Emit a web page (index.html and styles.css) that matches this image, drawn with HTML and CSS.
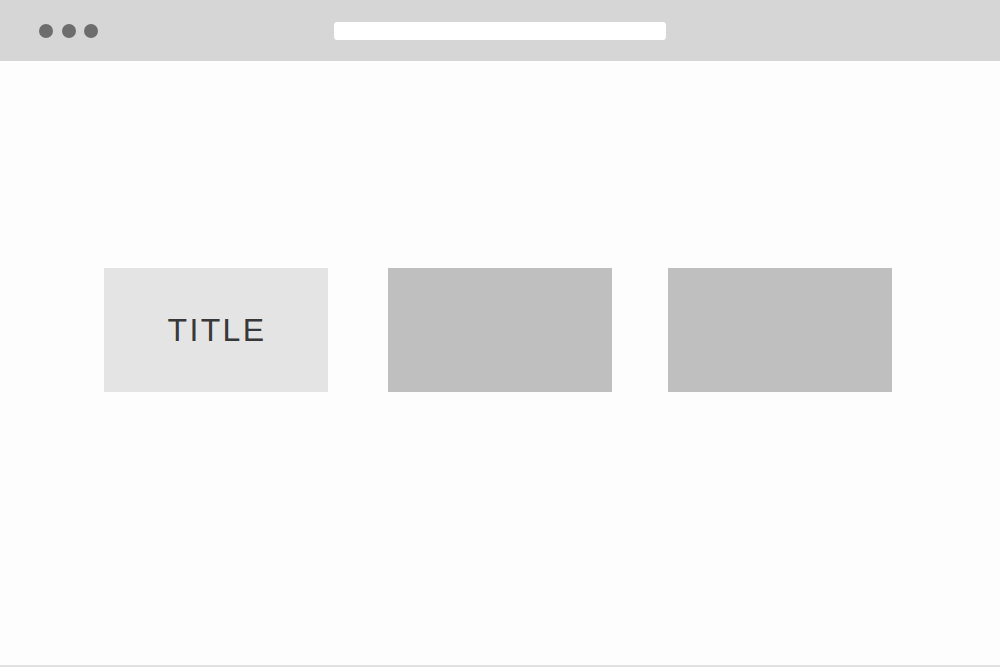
FILE: index.html
```html
<!DOCTYPE html>
<html>
<head>
<meta charset="utf-8">
<link rel="stylesheet" href="styles.css">
</head>
<body>
<div class="window">
  <header class="toolbar">
    <div class="dots">
      <span class="dot"></span>
      <span class="dot"></span>
      <span class="dot"></span>
    </div>
    <div class="address"></div>
  </header>
  <main class="content">
    <div class="cards">
      <div class="card card-title"><span class="title">TITLE</span></div>
      <div class="card card-gray card-mid"></div>
      <div class="card card-gray"></div>
    </div>
  </main>
  <div class="bottom-line"></div>
</div>
</body>
</html>
```

FILE: styles.css
```css
html, body {
  margin: 0;
  padding: 0;
  background: #fdfdfd;
  font-family: "Liberation Sans", Arial, sans-serif;
}
.window {
  width: 1000px;
  height: 667px;
  display: flex;
  flex-direction: column;
}
.toolbar {
  height: 61px;
  background: #d6d6d6;
  display: flex;
  align-items: center;
  position: relative;
}
.dots {
  display: flex;
  gap: 8.5px;
  padding-left: 39px;
  margin-top: 1px;
}
.dot {
  width: 14px;
  height: 14px;
  border-radius: 50%;
  background: #6d6d6d;
}
.address {
  position: absolute;
  left: 334px;
  top: 22px;
  width: 332px;
  height: 18px;
  background: #ffffff;
  border-radius: 3px;
}
.content {
  flex: 1;
  display: flex;
  flex-direction: column;
}
.cards {
  display: flex;
  padding-left: 104px;
  margin-top: 207px;
}
.card {
  width: 224px;
  height: 124px;
}
.card-title {
  background: #e4e4e4;
  display: flex;
  align-items: center;
  justify-content: center;
}
.title {
  font-family: "Liberation Sans", Arial, sans-serif;
  font-size: 32px;
  letter-spacing: 2.4px;
  color: #383838;
  margin-left: 2px;
  margin-top: 1px;
}
.card-gray {
  background: #bfbfbf;
}
.card-mid {
  margin-left: 60px;
  margin-right: 56px;
}
.bottom-line {
  height: 2px;
  background: #e2e2e2;
}
```
